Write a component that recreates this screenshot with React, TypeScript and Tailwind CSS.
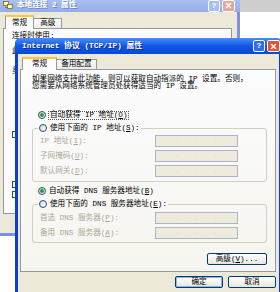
import React from 'react';

const Radio = ({ checked = false }: { checked?: boolean }) => (
  <span className="flex h-[8px] w-[8px] shrink-0 items-center justify-center rounded-full border border-[#1c5180] bg-linear-to-br from-[#d8d4c8] to-white">
    {checked && <span className="h-[4px] w-[4px] rounded-full bg-[#2a9a2a]" />}
  </span>
);

const IpBox = () => (
  <div className="flex h-[12px] w-[83px] items-center justify-around border border-[#a9b6c6] bg-[#eeebdc] px-[12px] text-[6px] leading-none text-[#cfcbbb]">
    <span>.</span>
    <span>.</span>
    <span>.</span>
  </div>
);

const Field = ({ label }: { label: React.ReactNode }) => (
  <div className="flex h-[12px] items-center justify-between">
    <span className="text-[#aca899]">{label}</span>
    <IpBox />
  </div>
);

const XpButton = ({ children, w, def = false }: { children: React.ReactNode; w: string; def?: boolean }) => (
  <div
    className={`flex h-[12px] ${w} items-center justify-center rounded-[2px] border border-[#003c74] bg-linear-to-b from-white to-[#e8e6dc] ${def ? 'shadow-[inset_0_0_0_1px_#8cb4f2]' : ''}`}
  >
    {children}
  </div>
);

const CapButtons = ({ faded = false }: { faded?: boolean }) => (
  <div className="flex gap-[2px]">
    <div
      className={`flex h-[12px] w-[12px] items-center justify-center rounded-[2px] border border-white text-[8px] font-bold leading-none text-white ${faded ? 'bg-[#a9bff0]' : 'bg-[#2d6ff2]'}`}
    >
      ?
    </div>
    <div
      className={`flex h-[12px] w-[13px] items-center justify-center rounded-[2px] border border-white ${faded ? 'bg-[#e4a89a]' : 'bg-[#e2552b]'}`}
    >
      <svg width="7" height="7" viewBox="0 0 7 7">
        <path d="M1 1L6 6M6 1L1 6" stroke="white" strokeWidth="1.6" />
      </svg>
    </div>
  </div>
);

export default function App() {
  return (
    <div className="relative h-[292px] w-[280px] overflow-hidden bg-white font-['Liberation_Mono','Noto_Sans_CJK_SC',monospace] text-[7.6px] leading-[7px] text-black">
      {/* strip of another window behind */}
      <div className="absolute left-[240px] top-0 h-[12px] w-[40px] bg-[#cfcfcf]" />

      {/* back window: 本地连接 2 属性 */}
      <div className="absolute left-[-5px] top-[-4px] flex h-[240px] w-[245px] flex-col">
        <div className="flex h-[16px] shrink-0 items-center justify-between bg-linear-to-b from-[#b3c6f2] to-[#92ade8] pl-[8px] pr-[5px] pt-[3px]">
          <div className="flex items-center gap-[4px]">
            <svg width="10" height="9" viewBox="0 0 10 9">
              <rect x="0.5" y="0.5" width="5" height="4" fill="#fff8c0" stroke="#7a6a20" strokeWidth="0.8" />
              <rect x="4.5" y="3.5" width="5" height="4" fill="#fff8c0" stroke="#7a6a20" strokeWidth="0.8" />
              <path d="M2 6.5H5" stroke="#7a6a20" strokeWidth="0.8" />
            </svg>
            <span className="font-bold text-white [text-shadow:1px_1px_#6f88c8]">本地连接 2 属性</span>
          </div>
          <CapButtons faded />
        </div>
        <div className="flex flex-1 flex-col border-x-[3px] border-b-[3px] border-[#7f90de] bg-[#ece9d8] px-[5px] pt-[3px]">
          <div className="relative z-10 flex h-[13px] items-end pl-[2px]">
            <div className="-mb-px flex h-[14px] items-center border-x border-t-2 border-[#919b9c] border-t-[#ffc83c] bg-[#fcfcfe] px-[6px]">
              常规
            </div>
            <div className="flex h-[10px] items-center border-r border-t border-[#919b9c] bg-linear-to-b from-white to-[#ecebe6] px-[6px]">
              高级
            </div>
          </div>
          <div className="flex h-[186px] flex-col border border-[#919b9c] bg-[#fcfcfe] pl-[8px]">
            <div className="mt-[4px]">连接时使用:</div>
            <div className="mt-[8px]">此</div>
            <div className="mt-[13px]">身</div>
            <div className="mt-[56px] h-[7px] w-[7px] border border-[#1c5180] bg-white" />
            <div className="mt-[43px] h-[7px] w-[7px] border border-[#1c5180] bg-white" />
            <div className="mt-[3px] h-[7px] w-[7px] border border-[#1c5180] bg-white" />
          </div>
        </div>
      </div>

      {/* front window: Internet 协议 (TCP/IP) 属性 */}
      <div className="absolute left-[15px] top-[38px] flex h-[262px] w-[267px] flex-col overflow-hidden rounded-t-[5px]">
        <div className="flex h-[16px] shrink-0 items-center justify-between bg-linear-to-b from-[#4a8cf6] via-[#0f58e6] to-[#0848d4] pl-[7px] pr-[2px]">
          <span className="font-bold text-[7.8px] text-white [text-shadow:1px_1px_#0a2a90]">
            Internet 协议 (TCP/IP) 属性
          </span>
          <CapButtons />
        </div>
        <div className="flex flex-1 flex-col border-x-[3px] border-[#0a3fd6] bg-[#ece9d8] pl-[2px] pr-[3px] pt-[3px]">
          <div className="relative z-10 flex h-[12px] items-end pl-[2px]">
            <div className="-mb-px flex h-[13px] items-center border-x border-t-2 border-[#919b9c] border-t-[#ffc83c] bg-[#fcfcfe] px-[9px]">
              常规
            </div>
            <div className="flex h-[10px] items-center border-r border-t border-[#919b9c] bg-linear-to-b from-white to-[#ecebe6] px-[4px]">
              备用配置
            </div>
          </div>

          <div className="flex h-[203px] flex-col border border-[#919b9c] bg-linear-to-b from-[#fcfcfe] to-[#f6f5ef] pl-[11px] pr-[8px]">
            <p className="mt-[6px] whitespace-nowrap">
              如果网络支持此功能，则可以获取自动指派的 IP 设置。否则，
              <br />
              您需要从网络系统管理员处获得适当的 IP 设置。
            </p>

            <div className="ml-[6px] mt-[20px] flex h-[10px] items-center gap-[2px]">
              <Radio checked />
              <span className="border border-dotted border-[#555] px-[1px] leading-[7px]">
                自动获得 IP 地址(<u>O</u>)
              </span>
            </div>

            <fieldset className="mt-[3px] min-w-0 rounded-[3px] border border-[#d0d0bf] pb-[4px]">
              <legend className="ml-[5px] flex h-[10px] items-center gap-[3px] px-[1px]">
                <Radio />
                <span>
                  使用下面的 IP 地址(<u>S</u>):
                </span>
              </legend>
              <div className="flex flex-col gap-[3px] pl-[7px] pr-[28px] pt-[2px]">
                <Field label={<>IP 地址(<u>I</u>):</>} />
                <Field label={<>子网掩码(<u>U</u>):</>} />
                <Field label={<>默认网关(<u>D</u>):</>} />
              </div>
            </fieldset>

            <div className="ml-[6px] mt-[4px] flex h-[10px] items-center gap-[3px]">
              <Radio checked />
              <span>
                自动获得 DNS 服务器地址(<u>B</u>)
              </span>
            </div>

            <fieldset className="mt-[3px] min-w-0 rounded-[3px] border border-[#d0d0bf] pb-[3px]">
              <legend className="ml-[5px] flex h-[10px] items-center gap-[3px] px-[1px]">
                <Radio />
                <span>
                  使用下面的 DNS 服务器地址(<u>E</u>):
                </span>
              </legend>
              <div className="flex flex-col gap-[3px] pl-[7px] pr-[28px] pt-[3px]">
                <Field label={<>首选 DNS 服务器(<u>P</u>):</>} />
                <Field label={<>备用 DNS 服务器(<u>A</u>):</>} />
              </div>
            </fieldset>

            <div className="mt-[10px] flex justify-end">
              <XpButton w="w-[60px]">
                高级(<u>V</u>)...
              </XpButton>
            </div>
          </div>

          <div className="mt-[4px] flex justify-end gap-[5px]">
            <XpButton w="w-[48px]" def>
              确定
            </XpButton>
            <XpButton w="w-[48px]">取消</XpButton>
          </div>
        </div>
      </div>
    </div>
  );
}
